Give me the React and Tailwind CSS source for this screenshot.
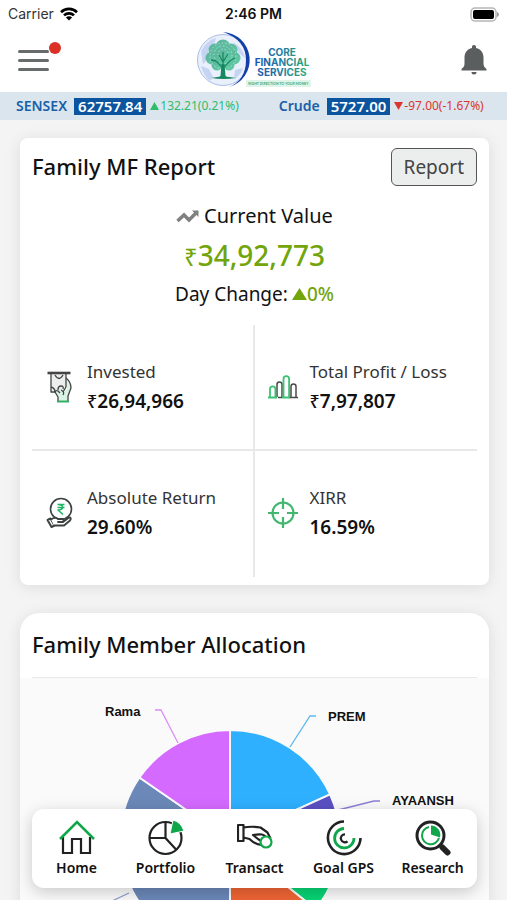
import React from 'react';

const quotes = [
  { name: 'SENSEX', price: '62757.84', change: '132.21(0.21%)', up: true },
  { name: 'Crude', price: '5727.00', change: '-97.00(-1.67%)', up: false },
];

const slices = [
  { name: 'PREM', from: 0, to: 65.5, color: '#2fb0ff' },
  { name: 'AYAANSH', from: 65.5, to: 88, color: '#5a50c4' },
  { name: 'Kids', from: 88, to: 129, color: '#06d474' },
  { name: 'Spouse', from: 129, to: 180, color: '#f06535' },
  { name: 'Parents', from: 180, to: 304.6, color: '#6b88b8' },
  { name: 'Rama', from: 304.6, to: 360, color: '#d46aff' },
];

// Leader lines and captions around the pie
const labels = [
  { name: 'Rama', x: 85, y: 38, line: '135,32 141,32 158,65', color: '#dd8cf7' },
  { name: 'PREM', x: 308, y: 43, line: '270,69 290,38 296,38', color: '#5db9ee' },
  { name: 'AYAANSH', x: 372, y: 127, line: '314,133 354,123 360,123', color: '#8a7fd6' },
  { name: '', x: 0, y: 0, line: '109,215 75,231 69,231', color: '#8f9fd0' },
];

const CX = 210;
const CY = 162;
const R = 110;

const slicePath = (from, to) => {
  const point = (deg) => {
    const a = (deg * Math.PI) / 180;
    return `${CX + R * Math.sin(a)} ${CY - R * Math.cos(a)}`;
  };
  return `M${CX} ${CY}L${point(from)}A${R} ${R} 0 ${to - from > 180 ? 1 : 0} 1 ${point(to)}Z`;
};

const WifiIcon = () => (
  <svg className="w-[18px] h-[14px]" viewBox="0 0 18 14" fill="none" stroke="#000" strokeWidth="2.6">
    <path d="M1 5.2a11.4 11.4 0 0 1 16 0" />
    <path d="M4 8.4a7.2 7.2 0 0 1 10 0" />
    <path d="M9 13.6 5.9 10.5a4.4 4.4 0 0 1 6.2 0z" fill="#000" stroke="none" />
  </svg>
);

const BatteryIcon = () => (
  <svg className="w-[31px] h-[15px]" viewBox="0 0 31 15">
    <rect x="3" y="1" width="25" height="13" rx="4" fill="#fff" stroke="#b5b5b5" strokeWidth="1.5" />
    <rect x="5" y="3" width="21" height="9" rx="2" fill="#000" />
    <path d="M29.5 5.5q2 2 0 4z" fill="#999" stroke="#999" />
  </svg>
);

const Logo = () => (
  <svg className="w-[120px] h-[60px]" viewBox="0 0 120 60" role="img" aria-label="Core Financial Services">
    <defs>
      <linearGradient id="brand" gradientUnits="userSpaceOnUse" x1="58" y1="0" x2="118" y2="0">
        <stop offset="0" stopColor="#1b4fb0" />
        <stop offset="0.5" stopColor="#237f9e" />
        <stop offset="1" stopColor="#2db36c" />
      </linearGradient>
      <linearGradient id="leaf" x1="0" y1="0" x2="1" y2="1">
        <stop offset="0" stopColor="#5cae9c" />
        <stop offset="1" stopColor="#5fd0a4" />
      </linearGradient>
    </defs>
    <circle cx="28" cy="30" r="25.5" fill="#e9effb" stroke="#a9bfe6" />
    <path d="M6 21q6-11 15-13l-2 7-6 5 1 8-6 6zM6 36l8 3 4 8-3 4Q8 45 6 36zM38 12q10 6 12 16l-6-5zM40 40l8-2q-3 8-9 11z" fill="#c5d4f2" />
    <path d="M28 2a28 28 0 0 1 6 55q17-7 17-27T28 2z" fill="#123fa8" />
    <g fill="url(#leaf)">
      <circle cx="28" cy="17" r="7.5" />
      <circle cx="20" cy="20" r="6.5" />
      <circle cx="36" cy="20" r="6.5" />
      <circle cx="17" cy="28" r="6.5" />
      <circle cx="39" cy="28" r="6.5" />
      <circle cx="22" cy="35" r="5.5" />
      <circle cx="34" cy="35" r="5.5" />
      <circle cx="28" cy="27" r="10" />
    </g>
    <g fill="none" stroke="#b8ead6" strokeWidth="0.8" strokeDasharray="1.5 2">
      <circle cx="28" cy="26" r="13" />
      <circle cx="28" cy="25" r="9" />
      <circle cx="28" cy="24" r="5" />
    </g>
    <path d="M28 47V22M28 38l-7-7M28 38l8-8M28 32l-4-7M28 32l5-8M21 31l-5-1M36 30l4-2" fill="none" stroke="#16875f" strokeWidth="1.3" />
    <path d="M26.500 34h3l1 12 3 2h-11l3-2z" fill="#16875f" />
    <path d="M16 48q12-3 25 0-12 2-25 0z" fill="#16875f" />
    <g fill="url(#brand)" fontFamily="Inter, sans-serif" fontWeight="700" fontSize="10" textAnchor="middle">
      <text x="87" y="26">CORE</text>
      <text x="87" y="36">FINANCIAL</text>
      <text x="87" y="46">SERVICES</text>
    </g>
    <rect x="51" y="50" width="65" height="7" fill="#dff5ea" />
    <text x="83.500" y="55" fill="#3fa87c" fontFamily="Lato, sans-serif" fontSize="3.500" fontWeight="700" textAnchor="middle">RIGHT DIRECTION TO YOUR MONEY</text>
  </svg>
);

const BellIcon = () => (
  <svg className="w-[26px] h-[30px]" viewBox="0 0 26 30" fill="#5b5e5f">
    <path d="M13 0c1.300 0 2 .9 2 2v1c5 1.200 7.500 5 7.500 9.500v6c0 2.500 1 4 3 5.500v1.500H.5V24c2-1.500 3-3 3-5.500v-6C3.500 8 6 4.200 11 3V2c0-1.100.7-2 2-2zM10.500 27h5a2.500 2.500 0 0 1-5 0z" />
  </svg>
);

const TrendIcon = () => (
  <svg className="w-6 h-[14px]" viewBox="0 0 24 14" fill="none" stroke="#808080" strokeWidth="3.500">
    <path d="M1.500 12 8 6l5 5 7.500-7.500" />
    <path d="M16 1.500h6.500V8z" fill="#808080" stroke="none" />
  </svg>
);

const Triangle = ({ down, className }) => (
  <svg className={className} viewBox="0 0 10 9" preserveAspectRatio="none" fill="currentColor">
    <path d={down ? 'M0 0h10L5 9z' : 'M0 9h10L5 0z'} />
  </svg>
);

const InvestedIcon = () => (
  <svg className="w-[30px] h-8" viewBox="0 0 30 32" fill="none" stroke="#444" strokeWidth="1.300" strokeLinejoin="round">
    <path d="M6 3h15v17H6z" fill="#eceeed" stroke="none" />
    <path d="M21 7q5 4 5 10l-3 7v6H13v-4l-3-6 3-3 3 1 3 3 3-3z" fill="#d9f3e5" stroke="none" />
    <path d="M2.500 2h23" strokeWidth="2.600" />
    <path d="M6 3v18h5M21 3v13M10 4q4 7 8 0M6 16q4 1 4 5" />
    <path d="M21 7q5 4 5 10l-3 8v5M21 16l-3 5M13 30v-4l-3-5q0-2 3-1l2 2M13 19q0-4 3-4t2 3M16 19q4 2 2 5" />
    <path d="M12 30.500h12" stroke="#35ad6a" strokeWidth="2" />
  </svg>
);

const BarsIcon = () => (
  <svg className="w-[30px] h-6" viewBox="0 0 30 24" fill="none" strokeWidth="1.500">
    <g stroke="#4a4a4a">
      <path d="M9 22V9.500a2.500 2.500 0 0 1 5 0V22M23 22V11.500a2.500 2.500 0 0 1 5 0V22M10 22.500h4M21 22.500h9" />
    </g>
    <g stroke="#3cc274">
      <path d="M2 22v-8a2.700 2.700 0 0 1 5.400 0v8M15.500 22V4a2.800 2.800 0 0 1 5.600 0v18M0 22.500h9M14 22.500h8" strokeWidth="1.800" />
    </g>
  </svg>
);

const ReturnIcon = () => (
  <svg className="w-[30px] h-8" viewBox="0 0 30 32" fill="none" stroke="#3d4140" strokeWidth="1.600" strokeLinejoin="round">
    <circle cx="16" cy="12" r="10.500" />
    <path d="M12.500 7.500h7M12.500 10.500h7M13 7.500c6 0 6 5.500 0 5.500l5 4.500" stroke="#20b565" strokeWidth="1.600" />
    <path d="M2.500 23l3-1.500 4 7-3 1.500z" strokeWidth="2" />
    <path d="M6 22.500q4-3 7-.5h5q2 2-1 3h-4 5l6-4.500q3 0 1 3l-6 5H9" strokeWidth="1.900" fill="#fff" />
  </svg>
);

const TargetIcon = () => (
  <svg className="w-[30px] h-[30px]" viewBox="0 0 30 30" fill="none" stroke="#43b76f" strokeWidth="2.200">
    <circle cx="15" cy="15" r="10.500" />
    <path d="M15 0v11M15 19v11M0 15h11M19 15h11" />
  </svg>
);

const HomeIcon = () => (
  <svg className="w-9 h-9" viewBox="0 0 36 36" fill="none" strokeWidth="2.200">
    <path d="M4 17v16h9V19h9v14h9V17" stroke="#222" />
    <path d="M1 19 18 2l17 17" stroke="#10a74a" strokeWidth="2.600" />
  </svg>
);

const PortfolioIcon = () => (
  <svg className="w-9 h-9" viewBox="0 0 36 36" fill="none" stroke="#222" strokeWidth="2.200">
    <circle cx="17.500" cy="18" r="16" />
    <path d="M17.500 2v16H2M17.500 18l11 12" />
    <path d="M25 0q8 2 11 11L22 14z" fill="#10a74a" stroke="#fff" strokeWidth="1" />
  </svg>
);

const TransactIcon = () => (
  <svg className="w-9 h-9" viewBox="0 0 36 36" fill="none" stroke="#222" strokeWidth="2.200" strokeLinejoin="round">
    <path d="M1 5h5.500v16H1zM6.500 7.500q8-1.500 17 0l7 5 3 6M6.500 17.500l6 1.500q5 5 12 6" />
    <path d="M26 24q-1-3-5-5l-5-4q5-1 9-.5 3 .5 4 3" />
    <circle cx="29" cy="22" r="5.500" stroke="#10a74a" fill="#fff" />
  </svg>
);

const GoalIcon = () => (
  <svg className="w-9 h-9" viewBox="0 0 36 36" fill="none" stroke="#222" strokeWidth="2.600">
    <path d="M18 1.500a16.300 16.300 0 1 0 16.500 16.500" />
    <path d="M18 8.500a9.700 9.700 0 1 0 10 9.500" stroke="#10a74a" strokeWidth="2.800" />
    <path d="M19 14.300a4 4 0 1 0 2.500 7" strokeWidth="2.200" />
  </svg>
);

const ResearchIcon = () => (
  <svg className="w-9 h-9" viewBox="0 0 36 36" fill="none" stroke="#222">
    <circle cx="15.500" cy="15.500" r="13.500" strokeWidth="3" />
    <path d="M25 25l3 3" strokeWidth="3" />
    <path d="M27.500 27.500l5 5" strokeWidth="6" strokeLinecap="round" />
    <path d="M14 7a8.700 8.700 0 1 0 10 11" stroke="#10a74a" strokeWidth="2" />
    <path d="M16 5.500a9.500 9.500 0 0 1 9 12l-9-3z" fill="#10a74a" stroke="none" />
  </svg>
);

const stats = [
  { label: 'Invested', value: '26,94,966', money: true, icon: InvestedIcon },
  { label: 'Total Profit / Loss', value: '7,97,807', money: true, icon: BarsIcon },
  { label: 'Absolute Return', value: '29.60%', icon: ReturnIcon },
  { label: 'XIRR', value: '16.59%', icon: TargetIcon },
];

const tabs = [
  { label: 'Home', icon: HomeIcon },
  { label: 'Portfolio', icon: PortfolioIcon },
  { label: 'Transact', icon: TransactIcon },
  { label: 'Goal GPS', icon: GoalIcon },
  { label: 'Research', icon: ResearchIcon },
];

const App = () => {
  return (
    <div className="relative flex flex-col h-screen overflow-hidden bg-[#f4f4f4] text-[#111] font-['Noto_Sans',sans-serif]">
      {/* Status bar */}
      <div className="grid grid-cols-3 items-center h-7 px-2 bg-white font-['Inter',sans-serif] text-sm">
        <div className="flex items-center gap-1.5 text-[#333]">
          <span>Carrier</span>
          <WifiIcon />
        </div>
        <span className="text-center font-semibold">2:46 PM</span>
        <div className="flex justify-end">
          <BatteryIcon />
        </div>
      </div>

      {/* Header */}
      <header className="flex items-center justify-between h-16 pl-[18px] pr-5 bg-white">
        <button aria-label="Menu" className="relative flex flex-col gap-1.5 w-[31px]">
          <span className="h-[3px] rounded-full bg-[#686b6c]" />
          <span className="h-[3px] rounded-full bg-[#686b6c]" />
          <span className="h-[3px] rounded-full bg-[#686b6c]" />
          <span className="absolute -right-3 -top-2 size-3 rounded-full bg-[#dc3027]" />
        </button>
        <Logo />
        <button aria-label="Notifications">
          <BellIcon />
        </button>
      </header>

      {/* Market ticker */}
      <div className="flex items-center gap-10 h-7 px-4 bg-[#dbe5ee] whitespace-nowrap">
        {quotes.map((q) => (
          <div key={q.name} className="flex items-center">
            <span className="text-sm font-semibold text-[#1a60a8]">{q.name}</span>
            <span className="ml-[7px] px-1 h-[17px] leading-[17px] text-[15px] font-semibold text-white bg-[#0b55a0]">{q.price}</span>
            <span className={q.up ? 'flex items-center ml-1 text-xs text-[#2dbd6b]' : 'flex items-center ml-1 text-xs text-[#dc3530]'}>
              <Triangle down={!q.up} className="w-[9px] h-2 mr-px" />
              {q.change}
            </span>
          </div>
        ))}
      </div>

      <main className="flex-1 overflow-y-auto [scrollbar-width:none] pl-5 pr-[18px] pt-[18px]">
        {/* Report card */}
        <section className="px-3 pb-2 bg-white rounded-lg shadow-[0_2px_16px_rgba(0,0,0,0.1)]">
          <div className="flex items-start justify-between pt-[10px]">
            <h2 className="text-[22px] leading-9 font-medium">Family MF Report</h2>
            <button className="h-[38px] px-3 text-[19px] text-[#444] bg-[#eceeee] border border-[#555] rounded-md">Report</button>
          </div>

          <div className="flex flex-col items-center pt-[14px] pb-[15px]">
            <div className="flex items-center gap-1 text-xl leading-8">
              <TrendIcon />
              <span>Current Value</span>
            </div>
            <div className="text-[28px] leading-[46px] font-medium text-[#72a40b]">
              <span className="text-2xl font-normal">₹</span>34,92,773
            </div>
            <div className="flex items-center text-[19px] leading-8">
              <span>Day Change:</span>
              <span className="flex items-center ml-1 font-medium text-[#72a40b]">
                <Triangle className="w-[15px] h-3" />
                0%
              </span>
            </div>
          </div>

          <div className="grid grid-cols-2">
            {stats.map((s, i) => (
              <div
                key={s.label}
                className={`flex items-center gap-3 h-[126px] pl-[13px] border-[#e8e8e8] ${i % 2 === 0 ? 'border-r-2' : ''} ${i < 2 ? 'border-b-2' : 'pb-0.5'}`}
              >
                <s.icon />
                <div className="whitespace-nowrap">
                  <div className="text-[17px] leading-7 text-[#333]">{s.label}</div>
                  <div className="text-[19px] leading-[30px] font-semibold">
                    {s.money && <span className="text-lg font-medium">₹</span>}
                    {s.value}
                  </div>
                </div>
              </div>
            ))}
          </div>
        </section>

        {/* Allocation card */}
        <section className="mt-7 bg-[#fafafa] rounded-[20px] overflow-hidden shadow-[0_2px_16px_rgba(0,0,0,0.1)]">
          <div className="px-3 bg-white">
            <h2 className="h-[65px] text-[22px] leading-[62px] font-medium border-b border-[#e8e8e8]">Family Member Allocation</h2>
          </div>
          <svg className="w-full" viewBox="0 0 469 340" role="img" aria-label="Family member allocation chart">
            {slices.map((s) => (
              <path key={s.name} d={slicePath(s.from, s.to)} fill={s.color} stroke="#fafafa" strokeWidth="2" strokeLinejoin="round" />
            ))}
            {labels.map((l) => (
              <g key={l.line}>
                <polyline points={l.line} fill="none" stroke={l.color} strokeWidth="1.300" />
                <text x={l.x} y={l.y} fill="#111" fontFamily="Liberation Sans, sans-serif" fontSize="13" fontWeight="700">{l.name}</text>
              </g>
            ))}
          </svg>
        </section>
      </main>

      {/* Bottom navigation */}
      <nav className="absolute left-8 right-[30px] bottom-3 grid grid-cols-5 h-[79px] bg-white rounded-xl shadow-[0_4px_16px_rgba(0,0,0,0.2)]">
        {tabs.map((t) => (
          <a key={t.label} href="#" className="flex flex-col items-center pt-[11px] whitespace-nowrap">
            <t.icon />
            <span className="text-sm leading-6 font-semibold">{t.label}</span>
          </a>
        ))}
      </nav>
    </div>
  );
};

export default App;
